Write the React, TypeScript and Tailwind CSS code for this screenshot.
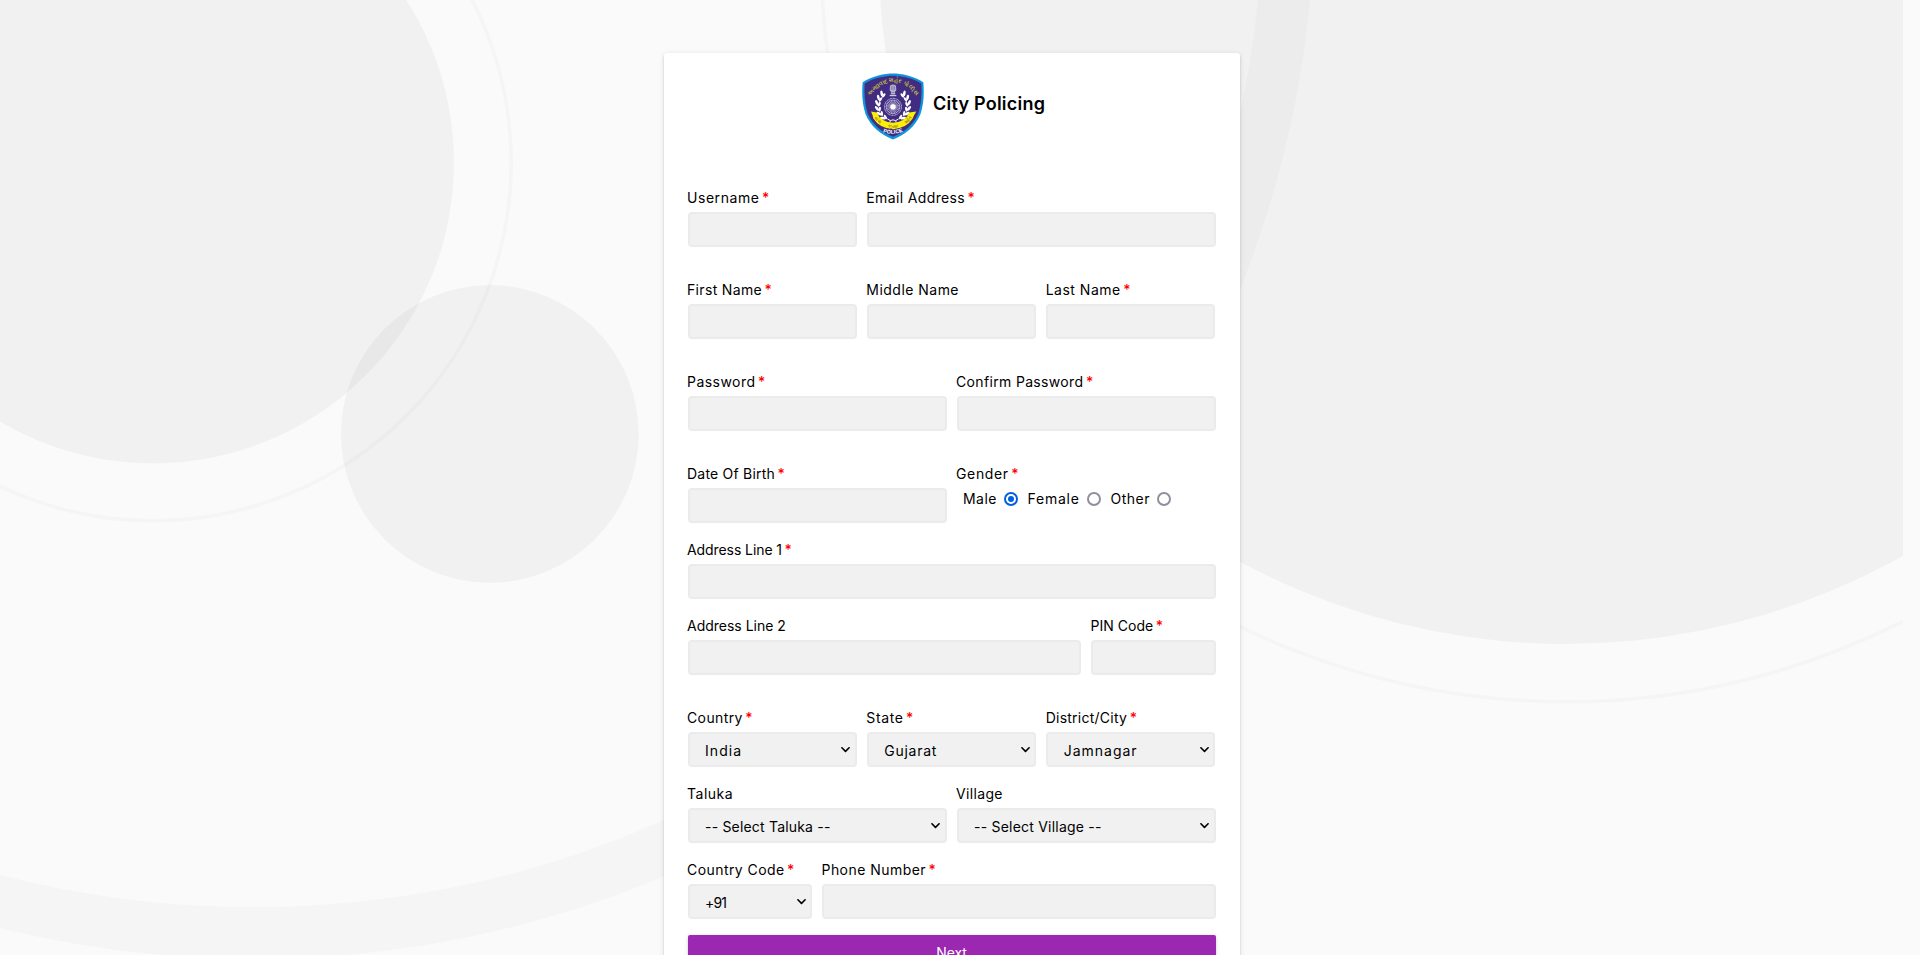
import React from "react";

type Label = { text: string; tracking: string; required?: boolean };

function Field({ label, className = "", children }: { label: Label; className?: string; children: React.ReactNode }) {
  return (
    <div className={`flex min-w-0 flex-col gap-0.5 ${className}`}>
      <label className="-ml-[0.5px] flex h-6 items-start whitespace-nowrap text-sm leading-6">
        <span className={label.tracking}>{label.text}</span>
        {label.required && <span className="ml-[2.5px] font-medium text-[#ff0000]">*</span>}
      </label>
      {children}
    </div>
  );
}

function TextInput({ type = "text" }: { type?: string }) {
  return (
    <input
      type={type}
      className="h-[35px] w-full rounded-[4px] border-2 border-[#ebebeb] bg-[#f1f1f1] px-4 text-sm outline-none"
    />
  );
}

function Select({ value, tracking }: { value: string; tracking: string }) {
  return (
    <div className="grid h-[35px] items-center">
      <select
        className={`col-start-1 row-start-1 h-[35px] w-full appearance-none rounded-[4px] border-2 border-[#ebebeb] bg-[#f1f1f1] pt-[2px] pl-[15.5px] text-sm text-black outline-none ${tracking}`}
      >
        <option>{value}</option>
      </select>
      <svg
        className="pointer-events-none col-start-1 row-start-1 mr-[6.5px] h-[6px] w-[9px] justify-self-end"
        viewBox="0 0 9 6"
        fill="none"
        stroke="#000"
        strokeWidth="1.6"
      >
        <path d="M0.9 0.8 L4.5 4.4 L8.1 0.8" strokeLinecap="round" strokeLinejoin="round" />
      </svg>
    </div>
  );
}

function Radio({ label, tracking, width, checked = false }: { label: string; tracking: string; width: string; checked?: boolean }) {
  return (
    <label className={`flex items-center justify-between text-sm leading-6 ${width}`}>
      <span className={tracking}>{label}</span>
      <span
        className={`flex size-[14px] items-center justify-center rounded-full border-2 bg-white ${
          checked ? "border-[#0060df]" : "border-[#8f8f9d]"
        }`}
      >
        {checked && <span className="size-[6px] rounded-full bg-[#0060df]" />}
      </span>
    </label>
  );
}

function Backdrop() {
  return (
    <svg className="absolute top-0 left-0" width="1903" height="955" viewBox="0 0 1903 955" fill="none">
      <circle cx="153" cy="162.5" r="301" fill="#000" fillOpacity="0.034" />
      <circle cx="153" cy="162.5" r="358.2" stroke="#000" strokeOpacity="0.018" strokeWidth="3.8" />
      <circle cx="489.8" cy="434" r="148.9" fill="#000" fillOpacity="0.034" />
      <circle cx="1566" cy="-43" r="687" fill="#000" fillOpacity="0.034" />
      <circle cx="1566" cy="-43" r="744.8" stroke="#000" strokeOpacity="0.018" strokeWidth="3.8" />
      <circle cx="254" cy="-102" r="1035" stroke="#000" strokeOpacity="0.018" strokeWidth="52" />
    </svg>
  );
}

const leaves = [
  [63, 60, -15],
  [53, 72, -10],
  [48, 87, 0],
  [48, 103, 15],
  [53, 118, 35],
  [63, 131, 55],
];

function Laurel() {
  return (
    <g fill="#fff">
      {leaves.map(([x, y, a]) => (
        <g key={y} transform={`rotate(${-a} ${x} ${y})`}>
          <ellipse cx={x - 4} cy={y} rx="4" ry="8.5" transform={`rotate(-25 ${x} ${y})`} />
          <ellipse cx={x + 6} cy={y + 4} rx="3.6" ry="7.5" transform={`rotate(25 ${x} ${y})`} />
        </g>
      ))}
    </g>
  );
}

const spokes = Array.from({ length: 24 }, (_, i) => i * 15);

function Badge() {
  return (
    <svg className="h-[67px] w-[62px]" viewBox="0 0 186 200">
      <path
        d="M93 1 C118 1 155 8 184 27 C187 62 185 94 175 124 C160 160 129 185 93 199 C57 185 26 160 11 124 C1 94 -1 62 2 27 C31 8 68 1 93 1 Z"
        fill="#0f94dc"
      />
      <path
        d="M93 8 C117 8 150 14 178 31 C180 62 178 92 169 121 C155 154 126 178 93 191 C60 178 31 154 17 121 C8 92 6 62 8 31 C36 14 69 8 93 8 Z"
        fill="#412c82"
      />
      <path id="badge-top" d="M25 66 Q93 -14 161 66" fill="none" />
      <text fill="#f4ea1c" className="font-['Noto_Sans',sans-serif] text-[18px] font-medium">
        <textPath href="#badge-top" startOffset="50%" textAnchor="middle" textLength="168">
          અમદાવાદ શહેર પોલીસ
        </textPath>
      </text>
      <g fill="#b9b4cf">
        <path d="M84 38 Q93 30 102 38 L103 51 L99 56 L100 64 H86 L87 56 L83 51 Z" />
        <path d="M83 66 H103 V69 H83 Z" fill="#e8e6f0" />
      </g>
      <path d="M88 39 V50 M93 37 V52 M98 39 V50 M88 58 H98" stroke="#5c4b92" strokeWidth="1.6" />
      <Laurel />
      <g transform="translate(186 0) scale(-1 1)">
        <Laurel />
      </g>
      <circle cx="93" cy="101" r="28" fill="#412c82" />
      <circle cx="93" cy="101" r="25.5" fill="none" stroke="#e6e3f0" strokeWidth="2.6" strokeDasharray="3 1.4" />
      <circle cx="93" cy="101" r="20.5" fill="none" stroke="#c6c0dc" strokeWidth="1.8" />
      {spokes.map((a) => (
        <path key={a} d="M93 101 V79" stroke="#dedaea" strokeWidth="1.6" transform={`rotate(${a} 93 101)`} />
      ))}
      <circle cx="93" cy="101" r="8" fill="#fff" />
      <path d="M82 147 Q93 133 104 147 M76 137 L86 143 M110 137 L100 143" stroke="#fff" strokeWidth="3" fill="none" />
      <path
        d="M27 115 L44 118 Q58 148 93 149 Q128 148 142 118 L163 115 Q154 128 152 136 Q134 165 93 168 Q52 165 34 136 Q33 127 27 115 Z"
        fill="#fcee04"
      />
      <path id="badge-ribbon" d="M36 131 Q56 163 93 163 Q130 163 152 131" fill="none" />
      <text fill="#5b4a45" className="font-['Noto_Sans',sans-serif] text-[14px]">
        <textPath href="#badge-ribbon" startOffset="2">સેવા</textPath>
      </text>
      <text fill="#5b4a45" className="font-['Noto_Sans',sans-serif] text-[13px]">
        <textPath href="#badge-ribbon" startOffset="50%" textAnchor="middle">સુરક્ષા</textPath>
      </text>
      <text fill="#5b4a45" className="font-['Noto_Sans',sans-serif] text-[14px]">
        <textPath href="#badge-ribbon" startOffset="108">શાંતિ</textPath>
      </text>
      <path id="badge-bottom" d="M61 176 Q93 188 125 174" fill="none" />
      <text fill="#fff" className="font-['Liberation_Sans',sans-serif] text-[16px] font-bold">
        <textPath href="#badge-bottom" startOffset="50%" textAnchor="middle" textLength="61">
          POLICE
        </textPath>
      </text>
    </svg>
  );
}

export default function App() {
  return (
    <main className="relative h-[955px] w-full overflow-hidden bg-[#fafafa] font-['Inter',sans-serif] text-black">
      <Backdrop />
      <div className="relative flex w-[1903px] justify-center pt-[53px]">
        <section className="w-[576px] rounded-[3px] bg-white px-6 pb-6 shadow-[0_2px_2px_0_rgba(0,0,0,0.14),0_3px_1px_-2px_rgba(0,0,0,0.2),0_1px_5px_0_rgba(0,0,0,0.12)]">
          <header className="flex h-[133px] items-start gap-[9.5px] pt-[19.5px] pl-[174px]">
            <Badge />
            <h1 className="pt-[17.5px] text-[18px] leading-7 font-semibold tracking-[0.23px] whitespace-nowrap">City Policing</h1>
          </header>

          <form className="flex flex-col gap-[15px]">
            <div className="mb-4 grid grid-cols-3 gap-[10px]">
              <Field label={{ text: "Username", tracking: "tracking-[0.55px]", required: true }}>
                <TextInput />
              </Field>
              <Field className="col-span-2" label={{ text: "Email Address", tracking: "tracking-[0.36px]", required: true }}>
                <TextInput type="email" />
              </Field>
            </div>

            <div className="mb-4 grid grid-cols-3 gap-[10px]">
              <Field label={{ text: "First Name", tracking: "tracking-[0.33px]", required: true }}>
                <TextInput />
              </Field>
              <Field label={{ text: "Middle Name", tracking: "tracking-[0.47px]" }}>
                <TextInput />
              </Field>
              <Field label={{ text: "Last Name", tracking: "tracking-[0.5px]", required: true }}>
                <TextInput />
              </Field>
            </div>

            <div className="mb-4 grid grid-cols-2 gap-[10px]">
              <Field label={{ text: "Password", tracking: "tracking-[0.46px]", required: true }}>
                <TextInput type="password" />
              </Field>
              <Field label={{ text: "Confirm Password", tracking: "tracking-[0.34px]", required: true }}>
                <TextInput type="password" />
              </Field>
            </div>

            <div className="grid grid-cols-2 gap-[10px]">
              <Field label={{ text: "Date Of Birth", tracking: "tracking-[0.22px]", required: true }}>
                <TextInput />
              </Field>
              <Field label={{ text: "Gender", tracking: "tracking-[0.65px]", required: true }}>
                <div className="-mt-px flex gap-[9.5px] pl-[6.5px]">
                  <Radio label="Male" tracking="tracking-[0.47px]" width="w-[55px]" checked />
                  <Radio label="Female" tracking="tracking-[0.78px]" width="w-[73.5px]" />
                  <Radio label="Other" tracking="tracking-[0.49px]" width="w-[60.5px]" />
                </div>
              </Field>
            </div>

            <Field label={{ text: "Address Line 1", tracking: "tracking-[-0.08px]", required: true }}>
              <TextInput />
            </Field>

            <div className="mb-4 grid grid-cols-[393.5px_124.5px] gap-[10px]">
              <Field label={{ text: "Address Line 2", tracking: "tracking-[-0.01px]" }}>
                <TextInput />
              </Field>
              <Field label={{ text: "PIN Code", tracking: "tracking-[0.03px]", required: true }}>
                <TextInput />
              </Field>
            </div>

            <div className="grid grid-cols-3 gap-[10px]">
              <Field label={{ text: "Country", tracking: "tracking-[0.38px]", required: true }}>
                <Select value="India" tracking="tracking-[1.05px]" />
              </Field>
              <Field label={{ text: "State", tracking: "tracking-[0.62px]", required: true }}>
                <Select value="Gujarat" tracking="tracking-[0.72px]" />
              </Field>
              <Field label={{ text: "District/City", tracking: "tracking-[0.25px]", required: true }}>
                <Select value="Jamnagar" tracking="tracking-[1px]" />
              </Field>
            </div>

            <div className="grid grid-cols-2 gap-[10px]">
              <Field label={{ text: "Taluka", tracking: "tracking-[0.51px]" }}>
                <Select value="-- Select Taluka --" tracking="tracking-[0.19px]" />
              </Field>
              <Field label={{ text: "Village", tracking: "tracking-[0.34px]" }}>
                <Select value="-- Select Village --" tracking="tracking-[0.22px]" />
              </Field>
            </div>

            <div className="grid grid-cols-[124.5px_393.5px] gap-[10px]">
              <Field label={{ text: "Country Code", tracking: "tracking-[0.43px]", required: true }}>
                <Select value="+91" tracking="tracking-[-0.8px]" />
              </Field>
              <Field label={{ text: "Phone Number", tracking: "tracking-[0.45px]", required: true }}>
                <TextInput type="tel" />
              </Field>
            </div>

            <button
              type="button"
              className="mt-px h-9 w-full rounded-[2px] bg-[#9c27b0] text-sm leading-9 tracking-[-0.15px] text-white shadow-[0_2px_2px_0_rgba(0,0,0,0.14),0_3px_1px_-2px_rgba(0,0,0,0.2),0_1px_5px_0_rgba(0,0,0,0.12)]"
            >
              Next
            </button>
          </form>
        </section>
      </div>
    </main>
  );
}
